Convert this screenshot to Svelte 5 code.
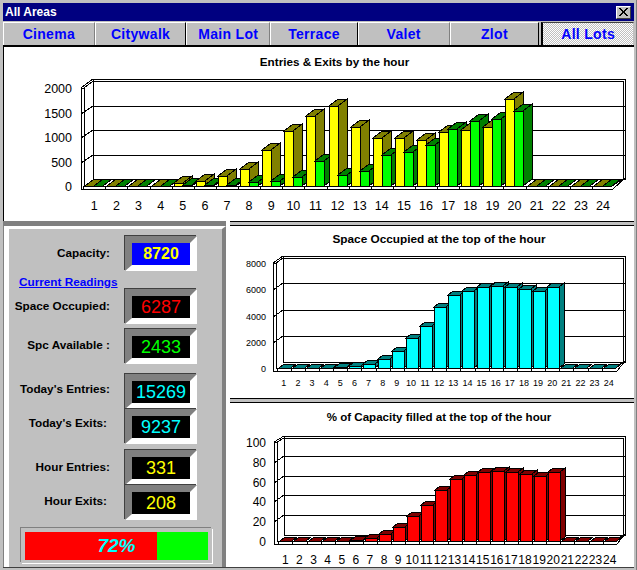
<script>
  const hours = Array.from({ length: 24 }, (_, i) => i + 1);

  // values read per hour; the last four hours have no data yet
  const entries = [0, 0, 0, 0, 55, 95, 200, 347, 735, 1122, 1420, 1630, 1197, 973, 973, 932, 1095, 1136, 1197, 1768, 0, 0, 0, 0];
  const exits = [0, 0, 0, 0, 25, 25, 25, 75, 95, 177, 503, 218, 300, 626, 687, 830, 1157, 1320, 1361, 1524, 0, 0, 0, 0];
  const occupied = [0, 0, 0, 0, 50, 127, 279, 686, 1295, 2286, 3200, 4648, 5562, 5867, 6172, 6248, 6172, 6019, 5867, 6172, 0, 0, 0, 0];
  const percent = [0, 0, 0, 0, 0, 1, 3, 7, 14, 25, 36, 51.5, 62.6, 66.7, 69.7, 70.7, 69.7, 67.7, 65.7, 69.7, 0, 0, 0, 0];

  const YELLOW = { front: '#ffff00', dark: '#808000' };
  const GREEN = { front: '#00ff00', dark: '#008000' };
  const CYAN = { front: '#00ffff', dark: '#008080' };
  const RED = { front: '#ff0000', dark: '#800000' };

  const tabs = [
    { name: 'Cinema', w: 92 },
    { name: 'Citywalk', w: 92, dark: true },
    { name: 'Main Lot', w: 84 },
    { name: 'Terrace', w: 88, dark: true },
    { name: 'Valet', w: 92 },
    { name: 'Zlot', w: 90, dark: true },
    { name: 'All Lots', w: 93, active: true },
  ];

  // all chart numbers are page pixels, the svg viewBox lines them up
  const topChart = {
    view: [3, 48, 631, 174],
    title: 'Entries & Exits by the hour', titleX: 334.5, titleY: 62.5, titleSize: 11.7,
    outerL: 81, innerL: 84, backL: 93, outerR: 625, innerR: 623, outerT: 80, innerT: 82,
    y0: 187, yTop: 89, floorB: 190, floorR: 613, wallDy: 7,
    cat0: 83.2, catW: 22.12, barOff: 2, barW: 9, dx: 9, dy: 7,
    max: 2000, step: 500, labelEnd: 72, labelSize: 12.5, xLabelY: 206, xLabelSize: 12.5,
    series: [{ data: entries, color: YELLOW }, { data: exits, color: GREEN }],
  };
  const midChart = {
    view: [226, 227, 408, 172],
    title: 'Space Occupied at the top of the hour', titleX: 439, titleY: 240, titleSize: 11.8,
    outerL: 273, innerL: 276, backL: 283, outerR: 625, innerR: 623, outerT: 257, innerT: 259,
    y0: 369, yTop: 264, floorB: 372, floorR: 617, wallDy: 6,
    cat0: 276.7, catW: 14.13, barOff: 2, barW: 12, dx: 5, dy: 4,
    max: 8000, step: 2000, labelEnd: 266, labelSize: 9, xLabelY: 384, xLabelSize: 9,
    series: [{ data: occupied, color: CYAN }],
  };
  const lowChart = {
    view: [226, 403, 408, 164],
    title: '% of Capacity filled at the top of the hour', titleX: 439, titleY: 417, titleSize: 11.55,
    outerL: 274, innerL: 277, backL: 284, outerR: 625, innerR: 623, outerT: 436, innerT: 438,
    y0: 541, yTop: 442, floorB: 544, floorR: 617, wallDy: 6,
    cat0: 278.3, catW: 14.1, barOff: 2, barW: 12, dx: 5, dy: 4,
    max: 100, step: 20, labelEnd: 266, labelSize: 12, xLabelY: 560, xLabelSize: 12,
    series: [{ data: percent, color: RED }],
  };

  const filled = 72;

  function ticks(c) {
    const out = [];
    for (let v = 0; v <= c.max; v += c.step) {
      out.push({ v, y: Math.round(c.y0 - (v / c.max) * (c.y0 - c.yTop)) });
    }
    return out;
  }

  function pts(list) {
    return list.map((p) => p.join(',')).join(' ');
  }

  function bars(c) {
    const out = [];
    hours.forEach((_, i) => {
      c.series.forEach((s, n) => {
        const x = Math.round(c.cat0 + i * c.catW + c.barOff) + n * c.barW;
        const t = Math.round(c.y0 - (s.data[i] / c.max) * (c.y0 - c.yTop));
        const b = c.y0;
        const r = x + c.barW;
        out.push({
          key: `${i}-${n}`,
          color: s.color,
          x, t, w: c.barW, h: b - t,
          top: pts([[x, t], [x + c.dx, t - c.dy], [r + c.dx, t - c.dy], [r, t]]),
          side: pts([[r, t], [r + c.dx, t - c.dy], [r + c.dx, b - c.dy], [r, b]]),
        });
      });
    });
    return out;
  }
</script>

{#snippet chart(c)}
  <svg
    class="chart"
    width={c.view[2]}
    height={c.view[3]}
    viewBox={c.view.join(' ')}
    shape-rendering="crispEdges"
  >
    <text class="title" x={c.titleX} y={c.titleY} font-size={c.titleSize}>{c.title}</text>

    <!-- frame of the 3d box -->
    <g fill="none" stroke="#000">
      <rect x={c.backL} y={c.outerT} width={c.outerR - c.backL} height={c.y0 - c.wallDy - c.outerT} />
      <line x1={c.backL} y1={c.innerT} x2={c.innerR} y2={c.innerT} />
      <line x1={c.innerR} y1={c.innerT} x2={c.innerR} y2={c.y0 - c.wallDy} />
      <line x1={c.outerL} y1={c.yTop} x2={c.outerL} y2={c.floorB} />
      <line x1={c.innerL} y1={c.yTop} x2={c.innerL} y2={c.y0} />
      <line x1={c.outerL} y1={c.yTop} x2={c.backL} y2={c.outerT} />
      <line x1={c.innerL} y1={c.yTop} x2={c.backL} y2={c.innerT} />
      <line x1={c.outerL} y1={c.yTop} x2={c.innerL} y2={c.yTop} />
      <polyline points={pts([[c.outerL, c.floorB], [c.floorR, c.floorB], [c.outerR, c.y0 - c.wallDy - 1]])} />
      <polyline points={pts([[c.innerL, c.y0], [c.floorR - 1, c.y0], [c.innerR, c.y0 - c.wallDy]])} />
      {#each ticks(c) as t}
        {#if t.v > 0 && t.v < c.max}
          <line x1={c.backL} y1={t.y - c.wallDy} x2={c.outerR} y2={t.y - c.wallDy} />
          <line x1={c.outerL} y1={t.y + 1} x2={c.backL} y2={t.y - c.wallDy} />
        {/if}
      {/each}
      <line x1={c.backL} y1={c.yTop - c.wallDy} x2={c.backL} y2={c.y0 - c.wallDy} />
      {#each hours as h, i}
        <line
          x1={Math.round(c.cat0 + i * c.catW)}
          y1={c.y0}
          x2={Math.round(c.cat0 + i * c.catW)}
          y2={c.floorB}
        />
      {/each}
    </g>

    {#each bars(c) as b (b.key)}
      <g stroke="#000">
        <polygon points={b.side} fill={b.color.dark} />
        <polygon points={b.top} fill={b.color.dark} />
        {#if b.h > 0}
          <rect x={b.x} y={b.t} width={b.w} height={b.h} fill={b.color.front} />
        {/if}
      </g>
    {/each}

    {#each ticks(c) as t}
      <text class="ylabel" x={c.labelEnd} y={t.y} dy="0.4em" font-size={c.labelSize}>{t.v}</text>
    {/each}
    {#each hours as h, i}
      <text
        class="xlabel"
        x={c.cat0 + i * c.catW + c.catW / 2}
        y={c.xLabelY}
        dy="0.36em"
        font-size={c.xLabelSize}
      >{h}</text>
    {/each}
  </svg>
{/snippet}

<div class="window">
  <header class="titlebar">
    <span>All Areas</span>
    <button class="close" aria-label="Close">
      <svg width="9" height="8" viewBox="0 0 9 8" shape-rendering="crispEdges">
        <path d="M0 0h2l2.500 3 2.500-3h2l-3.500 4 3.500 4h-2l-2.500-3-2.500 3h-2l3.500-4z" fill="#000" />
      </svg>
    </button>
  </header>

  <nav class="tabs">
    {#each tabs as tab}
      <button class="tab" class:dark={tab.dark} class:active={tab.active} style="width: {tab.w}px">{tab.name}</button>
    {/each}
  </nav>

  <section class="top">
    {@render chart(topChart)}
  </section>

  <div class="lower">
    <aside class="panel">
      <div class="panel-in">
        <div class="row first">
          <span class="label">Capacity:</span>
          <div class="readout capacity">8720</div>
        </div>
        <a class="link" href="#readings">Current Readings</a>

        <div class="group">
          <div class="row">
            <span class="label">Space Occupied:</span>
            <div class="readout red">6287</div>
          </div>
          <div class="row">
            <span class="label m4">Spc Available :</span>
            <div class="readout green">2433</div>
          </div>
        </div>

        <div class="group tight gap-l">
          <div class="row">
            <span class="label m6">Today's Entries:</span>
            <div class="readout cyan">15269</div>
          </div>
          <div class="row">
            <span class="label m8 exits">Today's Exits:</span>
            <div class="readout cyan">9237</div>
          </div>
        </div>

        <div class="group tight">
          <div class="row">
            <span class="label">Hour Entries:</span>
            <div class="readout yellow">331</div>
          </div>
          <div class="row">
            <span class="label m4 exits">Hour Exits:</span>
            <div class="readout yellow">208</div>
          </div>
        </div>

        <div class="gauge">
          <div class="gauge-fill" style="width: {filled}%"></div>
          <span class="gauge-text">{filled}%</span>
        </div>
      </div>
    </aside>

    <div class="charts">
      <div class="sep"></div>
      {@render chart(midChart)}
      <div class="sep"></div>
      {@render chart(lowChart)}
    </div>
  </div>
</div>

<style>
  :global(body) {
    margin: 0;
    background: #c0c0c0;
  }

  .window {
    box-sizing: border-box;
    width: 637px;
    height: 570px;
    overflow: hidden;
    padding: 3px 2px 2px 3px;
    display: flex;
    flex-direction: column;
    background: #c0c0c0;
    border-right: 1px solid #808080;
    font-family: "Liberation Sans", Arial, sans-serif;
    color: #000;
  }

  .titlebar {
    flex: none;
    height: 18px;
    display: flex;
    align-items: center;
    justify-content: space-between;
    padding: 0 3px 0 2px;
    background: #000080;
    color: #fff;
    font-size: 12px;
    font-weight: bold;
  }

  .close {
    box-sizing: border-box;
    width: 15px;
    height: 13px;
    padding: 0;
    display: flex;
    align-items: center;
    justify-content: center;
    background: #c0c0c0;
    border: 1px solid;
    border-color: #fff #404040 #404040 #fff;
  }

  .tabs {
    flex: none;
    display: flex;
    height: 26px;
    padding-top: 1px;
    box-sizing: border-box;
    border-bottom: 2px solid #000;
  }

  .tab {
    box-sizing: border-box;
    padding: 0 0 1px;
    background: #c0c0c0;
    border: none;
    border-top: 1px solid #fff;
    border-left: 1px solid #fff;
    border-right: 1px solid #808080;
    color: #0000ff;
    font: bold 14px "Liberation Sans", Arial, sans-serif;
    letter-spacing: 0.3px;
  }

  .tab.dark {
    border-right: 1px solid #000;
  }

  .tab.active {
    margin-left: 2px;
    background: repeating-conic-gradient(#c0c0c0 0 25%, #fff 0 50%) 0 0 / 2px 2px;
    border-top: 1px solid #404040;
    border-left: 2px solid #000;
    border-right: 1px solid #c0c0c0;
  }

  .top {
    flex: none;
    height: 174px;
    background: #fff;
    box-shadow: inset 1px 0 0 #000;
  }

  .chart {
    display: block;
  }

  .chart text {
    font-family: "Liberation Sans", Arial, sans-serif;
    fill: #000;
  }

  .chart .title {
    font-weight: bold;
    text-anchor: middle;
    dominant-baseline: central;
  }

  .chart .ylabel {
    text-anchor: end;
  }

  .chart .xlabel {
    text-anchor: middle;
  }

  .lower {
    flex: 1;
    display: flex;
    min-height: 0;
    border-bottom: 1px solid #404040;
  }

  .panel {
    box-sizing: border-box;
    flex: none;
    width: 223px;
    border-top: 5px solid #808080;
    border-left: 1px solid #808080;
    background: #c0c0c0;
  }

  .panel-in {
    box-sizing: border-box;
    height: 100%;
    display: flex;
    flex-direction: column;
    background: #c0c0c0;
    border-style: solid;
    border-width: 3px 4px 0 5px;
    border-color: #fff #808080 #c0c0c0 #fff;
  }

  .row {
    display: flex;
    align-items: center;
    justify-content: flex-end;
    padding-right: 25px;
  }

  .row.first {
    margin-top: 7px;
  }

  .label {
    flex: 1;
    margin: 0 15px 2px 0;
    font-size: 11.75px;
    font-weight: bold;
    text-align: right;
    white-space: nowrap;
  }

  .label.m4 {
    margin-bottom: 4px;
  }

  .label.m6 {
    margin-bottom: 6px;
  }

  .label.m8 {
    margin-bottom: 8px;
  }

  .label.exits {
    margin-right: 18px;
  }

  .readout {
    box-sizing: border-box;
    flex: none;
    width: 72px;
    height: 35px;
    display: flex;
    align-items: center;
    justify-content: center;
    background: #000;
    border-style: solid;
    border-width: 7px 7px 6px;
    border-color: #808080 #fff #fff #808080;
    box-shadow: -1px -1px 0 #404040;
    font-size: 18px;
  }

  .readout.capacity {
    background: #0000ff;
    color: #ffff00;
    font-size: 16px;
    font-weight: bold;
  }

  .readout.red {
    color: #ff0000;
  }

  .readout.green {
    color: #00ff00;
  }

  .readout.cyan {
    color: #00ffff;
  }

  .readout.yellow {
    color: #ffff00;
  }

  .link {
    box-sizing: border-box;
    height: 18px;
    padding: 2px 0 0 10px;
    display: flex;
    align-items: center;
    color: #0000ff;
    font-size: 11.75px;
    font-weight: bold;
    text-decoration: underline;
  }

  .group {
    display: flex;
    flex-direction: column;
    gap: 5px;
  }

  .group.tight {
    gap: 0;
    margin-top: 6px;
  }

  .group.gap-l {
    margin-top: 10px;
  }

  .gauge {
    box-sizing: border-box;
    position: relative;
    width: 191px;
    height: 35px;
    margin: 8px 0 0 12px;
    background: #00ff00;
    border-style: solid;
    border-width: 4px 4px 3px;
    border-color: #c0c0c0;
    box-shadow: -1px -1px 0 #808080, 1px 1px 0 #fff;
  }

  .gauge-fill {
    height: 100%;
    background: #ff0000;
  }

  .gauge-text {
    position: absolute;
    inset: 0;
    display: flex;
    align-items: center;
    justify-content: center;
    color: #00ffff;
    font-size: 19px;
    font-style: italic;
    font-weight: bold;
  }

  .charts {
    flex: 1;
    min-width: 0;
    background: #fff;
  }

  .sep {
    box-sizing: border-box;
    height: 5px;
    margin-left: 4px;
    background: #c0c0c0;
    border-top: 1px solid #000;
    border-bottom: 1px solid #000;
  }
</style>
